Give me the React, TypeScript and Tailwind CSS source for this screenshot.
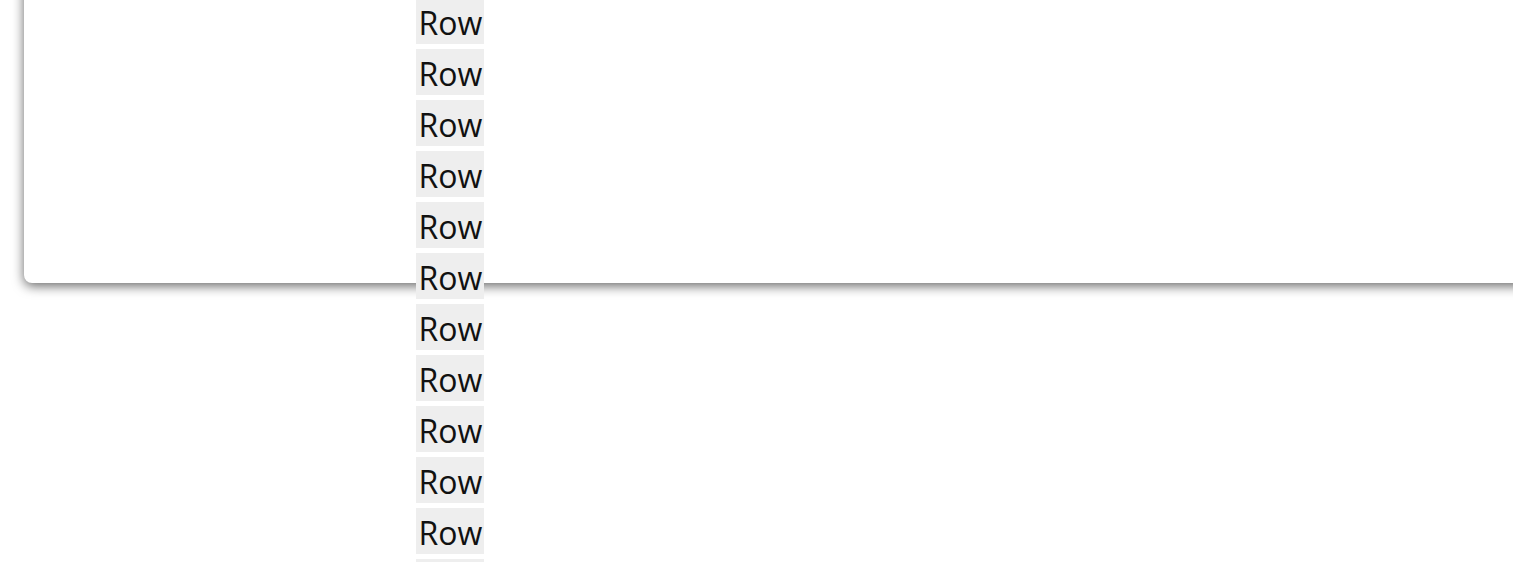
import React from 'react';

const ROWS = Array.from({ length: 12 }, (_, i) => i);

const App = () => {
  return (
    <div className="h-[562px] w-[1513px] overflow-hidden bg-white">
      {/* card behind the list */}
      <div className="ml-[24px] -mt-[40px] h-[323px] w-[1560px] rounded-lg bg-white shadow-[0_3px_12px_rgba(0,0,0,0.6)]" />
      <div className="relative z-10 -mt-[285px] ml-[416px] flex flex-col">
        {ROWS.map((i) => (
          <div
            key={i}
            className="mb-[4.6px] h-[46.4px] w-[68px] overflow-hidden bg-[#eeeeee] pl-[2.5px] pt-[2px] text-[32px] leading-[46px] text-[#111] font-['Open_Sans',sans-serif]"
          >
            Row
          </div>
        ))}
      </div>
    </div>
  );
};

export default App;
